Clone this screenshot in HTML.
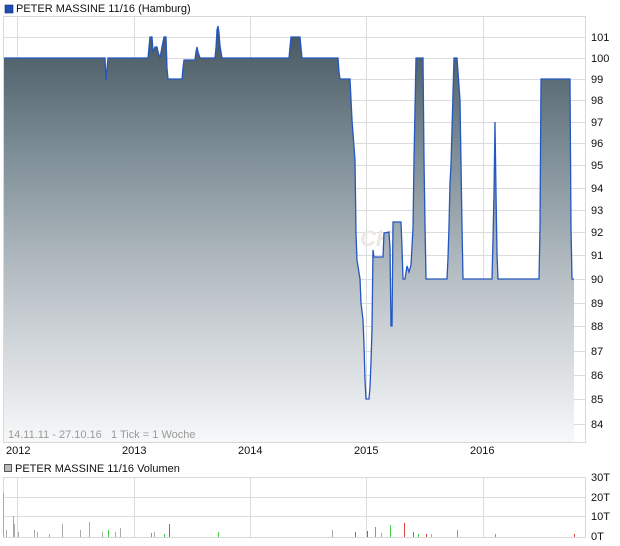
<!DOCTYPE html>
<html><head><meta charset="utf-8"><style>
body{margin:0;background:#fff;width:620px;height:546px;overflow:hidden;font-family:"Liberation Sans",sans-serif;}
svg{position:absolute;left:0;top:0}
text{font-family:"Liberation Sans",sans-serif;font-size:11px;fill:#111}
</style></head><body>
<svg width="620" height="546" viewBox="0 0 620 546">
<defs>
<linearGradient id="g" x1="0" y1="26" x2="0" y2="442" gradientUnits="userSpaceOnUse">
<stop offset="0" stop-color="#45555f"/>
<stop offset="0.3" stop-color="#7d8d96"/>
<stop offset="0.65" stop-color="#bfc6cb"/>
<stop offset="1" stop-color="#f7f8f9"/>
</linearGradient>
</defs>
<rect x="5" y="5" width="8" height="8" fill="#1f4fb0" stroke="#0a2a70" stroke-width="0.6"/>
<text x="16" y="12">PETER MASSINE 11/16 (Hamburg)</text>
<rect x="3.5" y="16.5" width="582" height="426" fill="#fff" stroke="#d8d8d8"/>
<g stroke="#dcdcdc" stroke-width="1">
<line x1="17.5" y1="17" x2="17.5" y2="442"/><line x1="134.5" y1="17" x2="134.5" y2="442"/><line x1="250.5" y1="17" x2="250.5" y2="442"/><line x1="366.5" y1="17" x2="366.5" y2="442"/><line x1="483.5" y1="17" x2="483.5" y2="442"/>
<line x1="4" y1="37.5" x2="585" y2="37.5"/><line x1="4" y1="58.5" x2="585" y2="58.5"/><line x1="4" y1="79.5" x2="585" y2="79.5"/><line x1="4" y1="100.5" x2="585" y2="100.5"/><line x1="4" y1="122.5" x2="585" y2="122.5"/><line x1="4" y1="143.5" x2="585" y2="143.5"/><line x1="4" y1="165.5" x2="585" y2="165.5"/><line x1="4" y1="188.5" x2="585" y2="188.5"/><line x1="4" y1="210.5" x2="585" y2="210.5"/><line x1="4" y1="232.5" x2="585" y2="232.5"/><line x1="4" y1="255.5" x2="585" y2="255.5"/><line x1="4" y1="279.5" x2="585" y2="279.5"/><line x1="4" y1="303.5" x2="585" y2="303.5"/><line x1="4" y1="326.5" x2="585" y2="326.5"/><line x1="4" y1="351.5" x2="585" y2="351.5"/><line x1="4" y1="375.5" x2="585" y2="375.5"/><line x1="4" y1="399.5" x2="585" y2="399.5"/><line x1="4" y1="424.5" x2="585" y2="424.5"/>
</g>
<text x="360" y="246" style="font-size:22px;font-style:italic;font-weight:bold;fill:#ebe7e3">CK</text>
<path d="M4 58 L105 58 L106 80 L108 58 L148 58 L149 47 L150 37 L152 37 L153 52 L155 47 L157 47 L158 52 L160 58 L162 47 L164 37 L166 37 L167 68 L168 79 L182 79 L183 68 L184 60 L195 60 L196 52 L197 47 L198 52 L200 58 L215 58 L216 48 L217 30 L218 26 L219 33 L220 46 L222 58 L289 58 L290 47 L291 37 L300 37 L302 58 L338 58 L339 72 L340 79 L350 79 L352 120 L355 160 L356 233 L357 260 L360 279 L361 303 L363 320 L364 345 L365 380 L366 399 L369 399 L370 387 L371 362 L372 330 L373 250 L374 257 L383 257 L384 233 L389 232 L390 248 L391 326 L392 326 L393 222 L401 222 L402 248 L403 279 L405 279 L407 266 L409 272 L411 265 L413 228 L414 160 L416 58 L423 58 L424 160 L425 224 L426 279 L447 279 L448 258 L449 226 L450 183 L451 165 L454 58 L457 58 L460 100 L462 227 L463 279 L492 279 L493 240 L494 193 L495 122 L496 193 L497 254 L498 279 L539 279 L540 228 L541 79 L570 79 L571 228 L572 279 L574 279 L574 442 L4 442 Z" fill="url(#g)"/>
<path d="M4 58 L105 58 L106 80 L108 58 L148 58 L149 47 L150 37 L152 37 L153 52 L155 47 L157 47 L158 52 L160 58 L162 47 L164 37 L166 37 L167 68 L168 79 L182 79 L183 68 L184 60 L195 60 L196 52 L197 47 L198 52 L200 58 L215 58 L216 48 L217 30 L218 26 L219 33 L220 46 L222 58 L289 58 L290 47 L291 37 L300 37 L302 58 L338 58 L339 72 L340 79 L350 79 L352 120 L355 160 L356 233 L357 260 L360 279 L361 303 L363 320 L364 345 L365 380 L366 399 L369 399 L370 387 L371 362 L372 330 L373 250 L374 257 L383 257 L384 233 L389 232 L390 248 L391 326 L392 326 L393 222 L401 222 L402 248 L403 279 L405 279 L407 266 L409 272 L411 265 L413 228 L414 160 L416 58 L423 58 L424 160 L425 224 L426 279 L447 279 L448 258 L449 226 L450 183 L451 165 L454 58 L457 58 L460 100 L462 227 L463 279 L492 279 L493 240 L494 193 L495 122 L496 193 L497 254 L498 279 L539 279 L540 228 L541 79 L570 79 L571 228 L572 279 L574 279" fill="none" stroke="#2457c0" stroke-width="1.3"/>
<text x="8" y="438" style="fill:#9a9a9a">14.11.11 - 27.10.16</text><text x="111" y="438" style="fill:#9a9a9a">1 Tick = 1 Woche</text>
<g>
<text x="591" y="41">101</text><text x="591" y="62">100</text><text x="591" y="83">99</text><text x="591" y="104">98</text><text x="591" y="126">97</text><text x="591" y="147">96</text><text x="591" y="169">95</text><text x="591" y="192">94</text><text x="591" y="214">93</text><text x="591" y="236">92</text><text x="591" y="259">91</text><text x="591" y="283">90</text><text x="591" y="307">89</text><text x="591" y="330">88</text><text x="591" y="355">87</text><text x="591" y="379">86</text><text x="591" y="403">85</text><text x="591" y="428">84</text>
</g>
<text x="6" y="454">2012</text><text x="122" y="454">2013</text><text x="238" y="454">2014</text><text x="354" y="454">2015</text><text x="470" y="454">2016</text>
<rect x="4.5" y="464.5" width="7" height="7" fill="#bbb" stroke="#333" stroke-width="0.8"/>
<text x="15" y="472">PETER MASSINE 11/16 Volumen</text>
<rect x="3.5" y="477.5" width="582" height="60" fill="#fff" stroke="#d8d8d8"/>
<g stroke="#dcdcdc"><line x1="17.5" y1="478" x2="17.5" y2="537"/><line x1="134.5" y1="478" x2="134.5" y2="537"/><line x1="250.5" y1="478" x2="250.5" y2="537"/><line x1="366.5" y1="478" x2="366.5" y2="537"/><line x1="483.5" y1="478" x2="483.5" y2="537"/>
<line x1="4" y1="497.5" x2="585" y2="497.5"/><line x1="4" y1="516.5" x2="585" y2="516.5"/></g>
<g stroke-width="1">
<g stroke="#aaa"><line x1="3.5" y1="493" x2="3.5" y2="537"/><line x1="6.5" y1="530" x2="6.5" y2="537"/><line x1="13.5" y1="516" x2="13.5" y2="537"/><line x1="14.5" y1="524" x2="14.5" y2="537"/><line x1="18.5" y1="532" x2="18.5" y2="537"/><line x1="34.5" y1="530" x2="34.5" y2="537"/><line x1="37.5" y1="532" x2="37.5" y2="537"/><line x1="49.5" y1="534" x2="49.5" y2="537"/><line x1="62.5" y1="524" x2="62.5" y2="537"/><line x1="80.5" y1="530" x2="80.5" y2="537"/><line x1="89.5" y1="522" x2="89.5" y2="537"/><line x1="102.5" y1="532" x2="102.5" y2="537"/><line x1="115.5" y1="532" x2="115.5" y2="537"/><line x1="120.5" y1="528" x2="120.5" y2="537"/><line x1="154.5" y1="532" x2="154.5" y2="537"/><line x1="332.5" y1="530" x2="332.5" y2="537"/><line x1="381.5" y1="533" x2="381.5" y2="537"/><line x1="431.5" y1="534" x2="431.5" y2="537"/></g>
<g stroke="#4c4"><line x1="108.5" y1="530" x2="108.5" y2="537"/><line x1="151.5" y1="533" x2="151.5" y2="537"/><line x1="164.5" y1="534" x2="164.5" y2="537"/><line x1="218.5" y1="532" x2="218.5" y2="537"/><line x1="375.5" y1="527" x2="375.5" y2="537"/><line x1="390.5" y1="525" x2="390.5" y2="537"/><line x1="418.5" y1="534" x2="418.5" y2="537"/><line x1="457.5" y1="530" x2="457.5" y2="537"/><line x1="495.5" y1="534" x2="495.5" y2="537"/></g>
<g stroke="#d44"><line x1="169.5" y1="524" x2="169.5" y2="537"/><line x1="355.5" y1="532" x2="355.5" y2="537"/><line x1="367.5" y1="531" x2="367.5" y2="537"/><line x1="404.5" y1="523" x2="404.5" y2="537"/><line x1="413.5" y1="532" x2="413.5" y2="537"/><line x1="426.5" y1="534" x2="426.5" y2="537"/><line x1="574.5" y1="534" x2="574.5" y2="537"/></g>
</g>
<text x="591" y="481">30T</text><text x="591" y="501">20T</text><text x="591" y="520">10T</text><text x="591" y="540">0T</text>
</svg>
</body></html>
